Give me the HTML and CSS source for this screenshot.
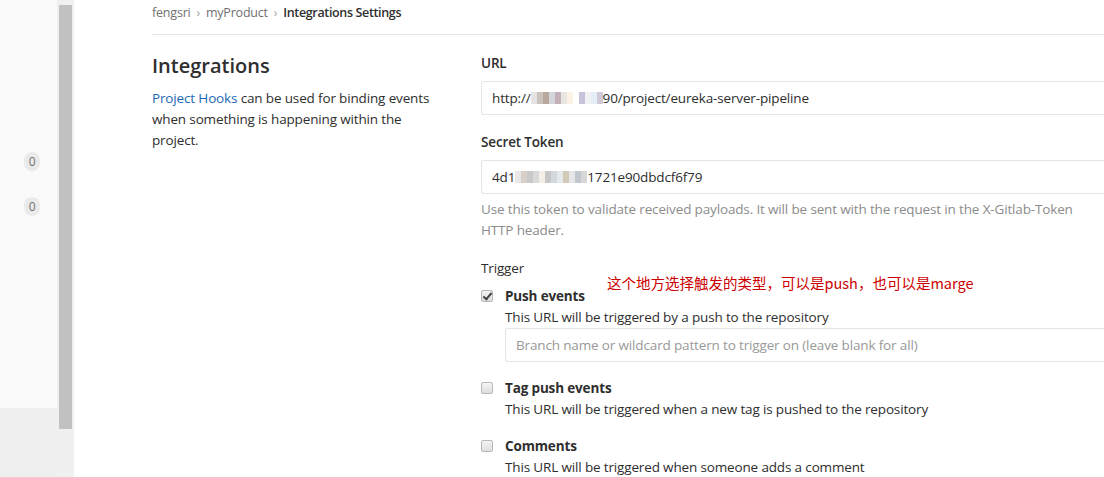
FILE: index.html
```html
<!DOCTYPE html>
<html lang="en">
<head>
  <meta charset="UTF-8">
  <title>Integrations Settings · myProduct</title>
  <link rel="stylesheet" href="styles.css">
</head>
<body>
  <aside class="sidebar">
    <div class="nav">
      <span class="badge">0</span>
      <span class="badge">0</span>
    </div>
    <div class="nav-footer"></div>
  </aside>
  <div class="scrollbar"><div class="thumb"></div></div>

  <main class="content">
    <div class="breadcrumbs">
      <a href="#">fengsri</a>
      <span class="sep">&rsaquo;</span>
      <a href="#">myProduct</a>
      <span class="sep">&rsaquo;</span>
      <strong>Integrations Settings</strong>
    </div>

    <div class="row">
      <div class="intro">
        <h2>Integrations</h2>
        <p><a href="#">Project Hooks</a> can be used for binding events when something is happening within the project.</p>
      </div>

      <form class="settings">
        <div class="form-group">
          <label>URL</label>
          <div class="field">http://<span class="mosaic">
            <i style="background:#e3e3e3"></i><i style="background:#c9c2bd"></i><i style="background:#b9a89c"></i><i style="background:#d3d6da"></i><i style="background:#c4b0b8"></i><i style="background:#e9e6e2"></i><i style="background:#fbf1e4"></i><i style="background:#fff"></i><i style="background:#c7c3da"></i><i style="background:#f2f2f2"></i><i style="background:#e4eef6"></i><i style="background:#cfcbd6"></i>
          </span>90/project/eureka-server-pipeline</div>
        </div>

        <div class="form-group">
          <label>Secret Token</label>
          <div class="field">4d1<span class="mosaic">
            <i style="background:#e8e8e8"></i><i style="background:#d8d0c8"></i><i style="background:#c9c9cc"></i><i style="background:#d9d9d9"></i><i style="background:#f4efe6"></i><i style="background:#c6c6c6"></i><i style="background:#d4d9de"></i><i style="background:#e5e9ec"></i><i style="background:#d3c9b8"></i><i style="background:#e4e6e8"></i><i style="background:#c2c7cd"></i><i style="background:#d7d7d7"></i>
          </span>1721e90dbdcf6f79</div>
          <p class="help">Use this token to validate received payloads. It will be sent with the request in the X-Gitlab-Token HTTP header.</p>
        </div>

        <div class="form-group trigger">
          <label class="plain">Trigger</label>
          <span class="note">这个地方选择触发的类型，可以是push，也可以是marge</span>

          <div class="check">
            <span class="box checked"></span>
            <div>
              <strong>Push events</strong>
              <p>This URL will be triggered by a push to the repository</p>
              <div class="field placeholder">Branch name or wildcard pattern to trigger on (leave blank for all)</div>
            </div>
          </div>

          <div class="check">
            <span class="box"></span>
            <div>
              <strong>Tag push events</strong>
              <p>This URL will be triggered when a new tag is pushed to the repository</p>
            </div>
          </div>

          <div class="check">
            <span class="box"></span>
            <div>
              <strong>Comments</strong>
              <p>This URL will be triggered when someone adds a comment</p>
            </div>
          </div>
        </div>
      </form>
    </div>
  </main>
</body>
</html>
```

FILE: styles.css
```css
html, body {
  height: 100%;
}

body {
  margin: 0;
  display: flex;
  overflow: hidden;
  font-family: "Open Sans", "Noto Sans", "Noto Sans CJK SC", sans-serif;
  font-size: 13.5px;
  letter-spacing: -0.15px;
  color: #2e2e2e;
  background-color: white;
}

a {
  color: #1b69b6;
  text-decoration: none;
}

/* collapsed sidebar */
.sidebar {
  width: 57px;
  flex-shrink: 0;
  display: flex;
  flex-direction: column;
}

.nav {
  height: 408px;
  background-color: #fafafa;
  display: flex;
  flex-direction: column;
  padding: 152px 0 0 24px;
  box-sizing: border-box;
  gap: 26px;
}

.badge {
  display: block;
  width: 16px;
  height: 19px;
  line-height: 19px;
  border-radius: 8px;
  background-color: #eaeaea;
  color: #707070;
  font-size: 12px;
  text-align: center;
}

.nav-footer {
  flex: 1;
  background-color: #efefef;
}

.scrollbar {
  width: 17px;
  flex-shrink: 0;
  background-color: #f0f0f0;
  padding: 5px 2px 0;
  box-sizing: border-box;
}

.thumb {
  height: 424px;
  background-color: #c1c1c1;
}

/* page content */
.content {
  flex: 1;
  padding-left: 78px;
  min-width: 0;
}

.breadcrumbs {
  height: 35px;
  border-bottom: 1px solid #e5e5e5;
  display: flex;
  align-items: center;
  font-size: 12.5px;
  letter-spacing: -0.2px;
  white-space: nowrap;
  box-sizing: border-box;
  padding-bottom: 9px;
}

.breadcrumbs a {
  color: #707070;
}

.breadcrumbs .sep {
  color: #a0a0a0;
  margin: 0 6px;
  font-size: 12px;
}

.breadcrumbs strong {
  font-weight: 600;
  letter-spacing: -0.35px;
  color: #2e2e2e;
}

.row {
  display: flex;
  padding-top: 16px;
}

.intro {
  width: 284px;
  flex-shrink: 0;
  margin-right: 45px;
}

.intro h2 {
  margin: 0 0 7px;
  font-size: 20px;
  font-weight: 600;
  line-height: 30px;
  letter-spacing: 0;
}

.intro p {
  margin: 0;
  line-height: 21px;
}

.settings {
  flex: 1;
  min-width: 0;
  padding-top: 2px;
}

.form-group {
  margin-bottom: 17px;
}

label {
  display: block;
  font-weight: 600;
  line-height: 20px;
  margin-bottom: 8px;
}

label.plain {
  font-weight: 400;
}

.field {
  height: 34px;
  border: 1px solid #e5e5e5;
  border-right: none;
  border-radius: 3px 0 0 3px;
  padding: 0 10px;
  display: flex;
  align-items: center;
  white-space: nowrap;
  box-sizing: border-box;
  color: #2e2e2e;
}

.field.placeholder {
  color: #999;
}

/* pixelated part of the address */
.mosaic {
  display: inline-flex;
  height: 12px;
}

.mosaic i {
  width: 6px;
  height: 12px;
}

.help {
  margin: 5px 0 0;
  color: #8c8c8c;
  line-height: 21px;
}

/* trigger checkboxes */
.trigger {
  position: relative;
  margin-top: 17px;
}

.note {
  position: absolute;
  left: 126px;
  top: 14px;
  color: #cc0000;
  font-family: "Noto Sans CJK SC", sans-serif;
  font-size: 14.5px;
  letter-spacing: 0;
}

.check {
  display: flex;
  margin-bottom: 17px;
}

.box {
  width: 12px;
  height: 12px;
  border: 1px solid #b8b8b8;
  border-radius: 2px;
  background: linear-gradient(#f4f4f4, #dedede);
  margin: 4px 12px 0 0;
  flex-shrink: 0;
  position: relative;
  box-sizing: border-box;
}

.box.checked::after {
  content: "";
  position: absolute;
  left: 3px;
  top: 0;
  width: 3px;
  height: 7px;
  border: solid #444;
  border-width: 0 2px 2px 0;
  transform: rotate(40deg);
}

.check > div {
  flex: 1;
  min-width: 0;
}

.check strong {
  display: block;
  font-weight: 700;
  line-height: 19px;
  padding-top: 1px;
}

.check p {
  margin: 2px 0 0;
  line-height: 19px;
}

.check .field {
  margin: 1px 0 -1px;
}
```
